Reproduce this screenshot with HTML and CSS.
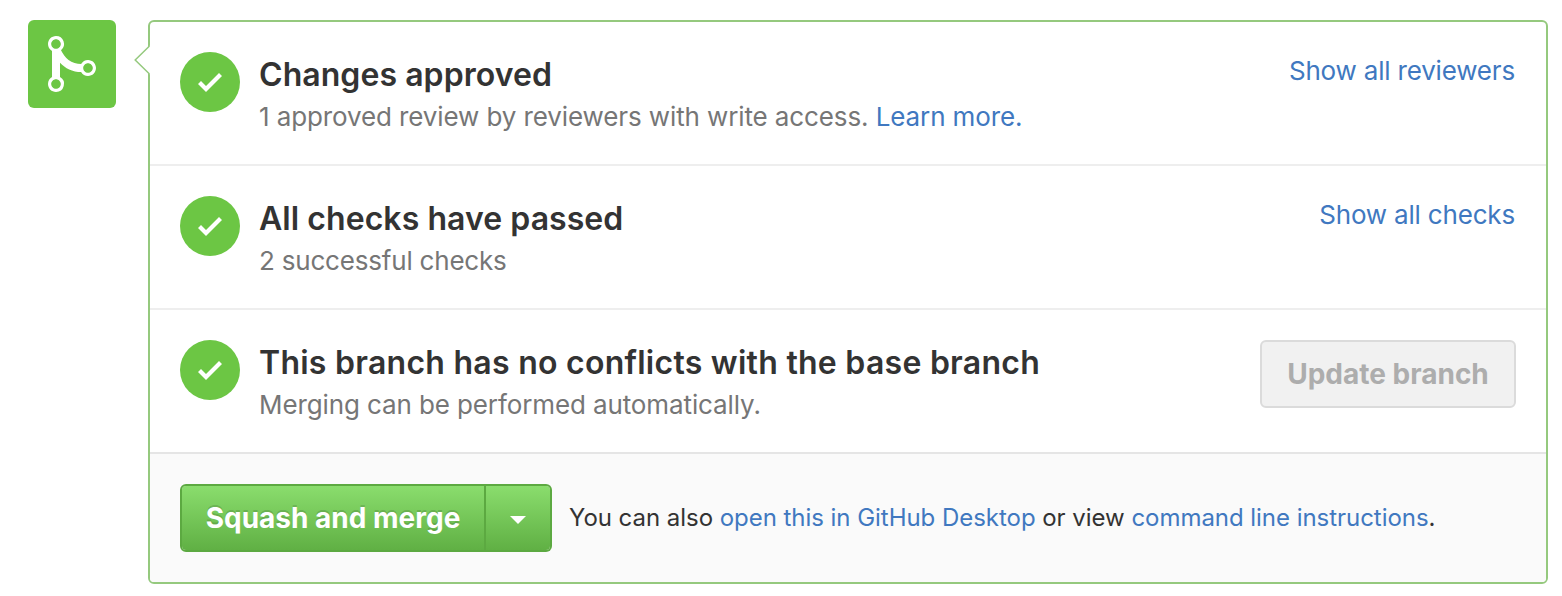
FILE: index.html
```html
<!DOCTYPE html>
<html lang="en">
<head>
<meta charset="utf-8">
<title>Merge pull request</title>
<link rel="stylesheet" href="styles.css">
</head>
<body>
<main class="merge">
  <div class="merge-badge">
    <svg width="48" height="64" viewBox="0 0 12 16" fill="#fff"><path fill-rule="evenodd" d="M10 7c-.73 0-1.38.41-1.73 1.02V8C7.22 7.98 6 7.64 5.14 6.98c-.75-.58-1.5-1.61-1.89-2.44A1.993 1.993 0 0 0 2 .99C.89.99 0 1.89 0 3a2 2 0 0 0 1 1.72v6.56c-.59.35-1 .99-1 1.72 0 1.11.89 2 2 2a1.993 1.993 0 0 0 1-3.72V7.67c.67.7 1.44 1.27 2.3 1.69.86.42 2.03.63 2.97.64v-.02c.36.61 1 1.02 1.73 1.02 1.11 0 2-.89 2-2 0-1.11-.89-2-2-2zm-6.8 6c0 .66-.55 1.2-1.2 1.2-.65 0-1.2-.55-1.2-1.2 0-.65.55-1.2 1.2-1.2.65 0 1.2.55 1.2 1.2zM2 4.2C1.34 4.2.8 3.65.8 3c0-.65.55-1.2 1.2-1.2.65 0 1.2.55 1.2 1.2 0 .65-.55 1.2-1.2 1.2zm8 6c-.66 0-1.2-.55-1.2-1.2 0-.65.55-1.2 1.2-1.2.65 0 1.2.55 1.2 1.2 0 .65-.55 1.2-1.2 1.2z"/></svg>
  </div>
  <div class="panel">
    <svg class="panel-pointer" width="16" height="32" viewBox="0 0 16 32"><path class="pointer-fill" d="M16 1.5V30.5L1.5 16z"/><path class="pointer-line" d="M15.5 2L1.2 16l14.3 14"/></svg>
    <section class="item">
      <span class="status"><svg width="24" height="32" viewBox="0 0 12 16"><path fill="#fff" d="M12 5l-8 8-4-4 1.5-1.5L4 10l6.5-6.5z"/></svg></span>
      <div class="item-body">
        <h4 class="item-title title-review">Changes approved</h4>
        <p class="item-text text-review">1 approved review by reviewers with write access. <a class="link" href="#">Learn more.</a></p>
      </div>
      <a class="link item-toggle" href="#">Show all reviewers</a>
    </section>
    <section class="item">
      <span class="status"><svg width="24" height="32" viewBox="0 0 12 16"><path fill="#fff" d="M12 5l-8 8-4-4 1.5-1.5L4 10l6.5-6.5z"/></svg></span>
      <div class="item-body">
        <h4 class="item-title title-checks">All checks have passed</h4>
        <p class="item-text text-checks">2 successful checks</p>
      </div>
      <a class="link item-toggle" href="#">Show all checks</a>
    </section>
    <section class="item">
      <span class="status"><svg width="24" height="32" viewBox="0 0 12 16"><path fill="#fff" d="M12 5l-8 8-4-4 1.5-1.5L4 10l6.5-6.5z"/></svg></span>
      <div class="item-body">
        <h4 class="item-title title-branch">This branch has no conflicts with the base branch</h4>
        <p class="item-text text-branch">Merging can be performed automatically.</p>
      </div>
      <button class="btn-disabled" disabled>Update branch</button>
    </section>
    <footer class="actions">
      <div class="btn-group">
        <button class="btn-merge">Squash and merge</button>
        <button class="btn-caret" aria-label="Select merge method"><span class="caret"></span></button>
      </div>
      <p class="hint">You can also <a class="link" href="#">open this in GitHub Desktop</a> or view <a class="link" href="#">command line instructions</a>.</p>
    </footer>
  </div>
</main>
</body>
</html>
```
FILE: styles.css
```css
* { box-sizing: border-box; }
body {
  margin: 0;
  background: #fff;
  color: #333;
  font-family: Inter, "Liberation Sans", sans-serif;
  font-size: 26px;
  overflow: hidden;
}
.merge {
  display: flex;
  align-items: flex-start;
  gap: 32px;
  padding: 20px 14px 12px 28px;
}
.merge-badge {
  flex: none;
  display: flex;
  align-items: center;
  justify-content: center;
  width: 88px;
  height: 88px;
  border-radius: 6px;
  background: #6cc644;
}
.panel {
  position: relative;
  flex: 1;
  height: 564px;
  border: 2px solid #95c97e;
  border-radius: 6px;
}
.panel-pointer {
  position: absolute;
  left: -16px;
  top: 22px;
}
.pointer-fill { fill: #fff; }
.pointer-line { fill: none; stroke: #95c97e; stroke-width: 1.5; }
.item {
  display: flex;
  align-items: flex-start;
  height: 144px;
  padding: 30px 30px 0;
  border-bottom: 2px solid #eee;
}
.item:nth-of-type(3) { border-bottom-color: #e5e5e5; }
.status {
  flex: none;
  display: flex;
  align-items: center;
  justify-content: center;
  width: 60px;
  height: 60px;
  margin-right: 19px;
  border-radius: 50%;
  background: #6cc644;
}
.status svg, .merge-badge svg { display: block; }
.item-body { flex: 1; white-space: nowrap; }
.item-title {
  margin: 0;
  font-size: 32px;
  font-weight: 600;
  line-height: 45px;
}
.title-review, .title-checks { letter-spacing: 0.06px; }
.title-branch { letter-spacing: 0.26px; }
.item-text {
  margin: 0;
  color: #767676;
  line-height: 39px;
  letter-spacing: -0.11px;
}
.text-checks { letter-spacing: -0.2px; }
.link { color: #4078c0; text-decoration: none; }
.item-toggle {
  margin-right: 1px;
  line-height: 37px;
  letter-spacing: -0.18px;
  white-space: nowrap;
}
.btn-disabled {
  width: 256px;
  height: 68px;
  padding: 0;
  border: 2px solid #dbdbdb;
  border-radius: 6px;
  background: #f1f1f1;
  color: #adadad;
  font: 700 28px/64px Inter, "Liberation Sans", sans-serif;
  white-space: nowrap;
}
.actions {
  display: flex;
  align-items: center;
  height: 128px;
  padding: 0 30px;
  border-radius: 0 0 4px 4px;
  background: #fafafa;
}
.btn-group { display: flex; flex: none; }
.btn-merge, .btn-caret {
  height: 68px;
  padding: 0;
  border: 2px solid #5ca941;
  background: linear-gradient(#8add6d, #60b044) padding-box;
}
.btn-merge {
  width: 306px;
  border-radius: 6px 0 0 6px;
  color: #fff;
  font: 700 28px/64px Inter, "Liberation Sans", sans-serif;
  text-shadow: 0 -2px 0 rgba(0, 0, 0, 0.15);
  white-space: nowrap;
}
.btn-caret {
  display: flex;
  align-items: center;
  justify-content: center;
  width: 66px;
  border-left: 0;
  border-radius: 0 6px 6px 0;
}
.caret {
  border: 8px solid transparent;
  border-top-color: #fff;
  border-bottom: 0;
  margin-top: 4px;
}
.hint {
  margin: 0 0 2px 17px;
  font-size: 24px;
  letter-spacing: -0.04px;
  white-space: nowrap;
}
```
